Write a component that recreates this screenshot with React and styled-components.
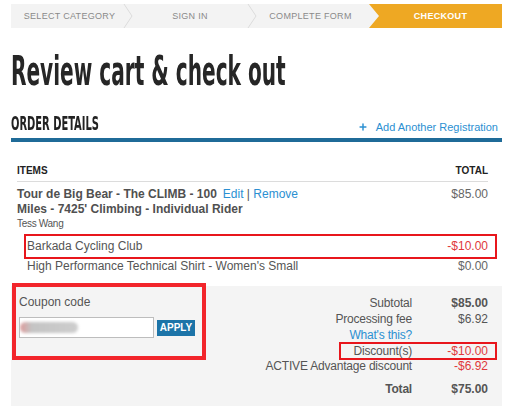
import React from 'react';
import styled, { createGlobalStyle } from 'styled-components';
import { Plus } from 'lucide-react';

const GlobalStyle = createGlobalStyle`
  body {
    margin: 0;
    background: #fff;
    font-family: "Liberation Sans", Arial, sans-serif;
  }
`;

const Page = styled.div`
  width: 491px;
  padding: 4px 0 0 11px;
`;

const Steps = styled.div`
  display: flex;
  height: 24px;
  background: #f3f3f3;
`;

const Step = styled.div`
  position: relative;
  display: flex;
  align-items: center;
  justify-content: center;
  width: ${p => p.$w}px;
  padding-left: ${p => (p.$active ? 10 : 0)}px;
  box-sizing: border-box;
  font-size: 9px;
  letter-spacing: 0.3px;
  text-transform: uppercase;
  color: ${p => (p.$active ? '#fff' : '#8a8a8a')};
  font-weight: ${p => (p.$active ? 700 : 400)};
  background: ${p => (p.$active ? '#eea823' : 'transparent')};
  clip-path: ${p => (p.$active ? 'polygon(0 0, 100% 0, 100% 100%, 0 100%, 10px 50%)' : 'none')};
`;

const Chevron = styled.svg`
  position: absolute;
  right: -5px;
  top: 0;
  width: 10px;
  height: 24px;
  z-index: 1;
`;

const Title = styled.h1`
  margin: 19px 0 0;
  height: 48px;
  line-height: 48px;
  font-family: "DejaVu Sans Condensed", "DejaVu Sans", sans-serif;
  font-weight: 700;
  font-size: 41px;
  color: #262626;
  white-space: nowrap;
`;

const Squeeze = styled.span`
  display: inline-block;
  transform: scaleX(${p => p.$x});
  transform-origin: left center;
`;

const SectionHead = styled.div`
  display: flex;
  justify-content: space-between;
  align-items: flex-end;
  margin-top: 17px;
  padding-bottom: 4px;
  border-bottom: 4px solid #1f6b98;
`;

const SectionTitle = styled.h2`
  margin: 0;
  font-family: "DejaVu Sans Condensed", "DejaVu Sans", sans-serif;
  font-weight: 700;
  font-size: 19px;
  line-height: 22px;
  color: #222;
  white-space: nowrap;
`;

const AddLink = styled.a`
  display: flex;
  align-items: center;
  gap: 8px;
  margin-right: 4px;
  font-size: 11px;
  line-height: 14px;
  color: #2b90d2;
  text-decoration: none;
`;

const Items = styled.div`
  margin: 22px 14px 0 6px;
`;

const HeadRow = styled.div`
  display: flex;
  justify-content: space-between;
  padding-bottom: 3px;
  border-bottom: 1px solid #dcdcdc;
  font-size: 10px;
  line-height: 14px;
  font-weight: 700;
  color: #222;
`;

const Row = styled.div`
  display: flex;
  justify-content: space-between;
  align-items: flex-start;
  margin-top: ${p => p.$top || 0}px;
  padding-left: ${p => p.$indent || 0}px;
  font-size: 12px;
  line-height: 15px;
  color: #555;
`;

const Highlight = styled(Row)`
  margin: 3px -9px 0 7px;
  padding: 3px 7px 3px 1px;
  border: 2px solid #e8161c;
`;

const ItemName = styled.div`
  font-weight: 700;
  color: #505050;
`;

const Links = styled.span`
  margin-left: 6px;
  font-weight: 400;
  color: #555;

  a {
    color: #2b90d2;
    text-decoration: none;
  }
`;

const Person = styled.div`
  font-size: 10px;
  line-height: 14px;
  color: #555;
  letter-spacing: -0.3px;
`;

const Amount = styled.span`
  color: ${p => (p.$red ? '#e0393b' : '#666')};
`;

const Summary = styled.div`
  display: flex;
  justify-content: space-between;
  margin-top: 12px;
  padding: 9px 14px 9px 1px;
  background: #f4f4f4;
`;

const Coupon = styled.div`
  width: 194px;
  height: 77px;
  box-sizing: border-box;
  margin-top: -12px;
  padding: 8px 0 0 3px;
  border: 4px solid #f2252b;
  font-size: 12px;
  line-height: 14px;
  color: #555;
`;

const CouponForm = styled.div`
  display: flex;
  align-items: center;
  gap: 3px;
  margin-top: 8px;
`;

const CodeBox = styled.div`
  position: relative;
  width: 135px;
  height: 21px;
  box-sizing: border-box;
  background: #fff;
  border: 1px solid #bdbdbd;
  overflow: hidden;
`;

const Blur = styled.span`
  position: absolute;
  left: 0;
  top: 4px;
  width: 58px;
  height: 11px;
  border-radius: 6px;
  background: linear-gradient(90deg, #dc9a9a 0%, #c4c4c4 20%, #cdcdcd 100%);
  filter: blur(1.5px);
`;

const ApplyButton = styled.button`
  width: 38px;
  height: 16px;
  padding: 0;
  border: none;
  background: #1c74a8;
  color: #fff;
  font-family: "Liberation Sans", Arial, sans-serif;
  font-size: 10px;
  font-weight: 700;
`;

const Totals = styled.div`
  display: flex;
  flex-direction: column;
  align-items: flex-end;
`;

const TotalRow = styled.div`
  display: flex;
  justify-content: flex-end;
  margin-top: ${p => p.$top || 0}px;
  font-size: 12px;
  line-height: 16px;
  color: #555;
  font-weight: ${p => (p.$bold ? 700 : 400)};
`;

const MarkedRow = styled(TotalRow)`
  width: 158px;
  box-sizing: border-box;
  margin: -1px -9px -2px 0;
  padding-right: 7px;
  line-height: 14px;
  border: 2px solid #e8161c;
`;

const Label = styled.span`
  text-align: right;
  letter-spacing: -0.2px;
  color: ${p => (p.$link ? '#2b90d2' : 'inherit')};
`;

const Value = styled.span`
  width: 76px;
  text-align: right;
  color: ${p => (p.$red ? '#e0393b' : '#555')};
  font-weight: ${p => (p.$bold ? 700 : 'inherit')};
`;

const steps = [
  { label: 'Select Category', w: 117 },
  { label: 'Sign In', w: 124 },
  { label: 'Complete Form', w: 117 },
  { label: 'Checkout', w: 133, active: true },
];

const App = () => {
  return (
    <Page>
      <GlobalStyle />
      <Steps>
        {steps.map(s => (
          <Step key={s.label} $w={s.w} $active={s.active}>
            {s.label}
            {!s.active && s.label !== 'Complete Form' && (
              <Chevron viewBox="0 0 10 24">
                <polyline points="1,0 9,12 1,24" fill="none" stroke="#dcdcdc" strokeWidth="1" />
              </Chevron>
            )}
          </Step>
        ))}
      </Steps>

      <Title>
        <Squeeze $x={0.545}>Review cart &amp; check out</Squeeze>
      </Title>

      <SectionHead>
        <SectionTitle>
          <Squeeze $x={0.58}>ORDER DETAILS</Squeeze>
        </SectionTitle>
        <AddLink href="#">
          <Plus size={10} strokeWidth={3.5} />
          Add Another Registration
        </AddLink>
      </SectionHead>

      <Items>
        <HeadRow>
          <span>ITEMS</span>
          <span>TOTAL</span>
        </HeadRow>
        <Row $top={5}>
          <div>
            <ItemName>
              Tour de Big Bear - The CLIMB - 100
              <Links>
                <a href="#">Edit</a> | <a href="#">Remove</a>
              </Links>
              <br />
              Miles - 7425' Climbing - Individual Rider
            </ItemName>
            <Person>Tess Wang</Person>
          </div>
          <Amount>$85.00</Amount>
        </Row>
        <Highlight>
          <span>Barkada Cycling Club</span>
          <Amount $red>-$10.00</Amount>
        </Highlight>
        <Row $indent={10}>
          <span>High Performance Technical Shirt - Women's Small</span>
          <Amount>$0.00</Amount>
        </Row>
      </Items>

      <Summary>
        <Coupon>
          Coupon code
          <CouponForm>
            <CodeBox>
              <Blur />
            </CodeBox>
            <ApplyButton>APPLY</ApplyButton>
          </CouponForm>
        </Coupon>
        <Totals>
          <TotalRow>
            <Label>Subtotal</Label>
            <Value $bold>$85.00</Value>
          </TotalRow>
          <TotalRow>
            <Label>Processing fee</Label>
            <Value>$6.92</Value>
          </TotalRow>
          <TotalRow>
            <Label $link>What's this?</Label>
            <Value />
          </TotalRow>
          <MarkedRow>
            <Label>Discount(s)</Label>
            <Value $red>-$10.00</Value>
          </MarkedRow>
          <TotalRow>
            <Label>ACTIVE Advantage discount</Label>
            <Value $red>-$6.92</Value>
          </TotalRow>
          <TotalRow $top={7} $bold>
            <Label>Total</Label>
            <Value>$75.00</Value>
          </TotalRow>
        </Totals>
      </Summary>
    </Page>
  );
};

export default App;
